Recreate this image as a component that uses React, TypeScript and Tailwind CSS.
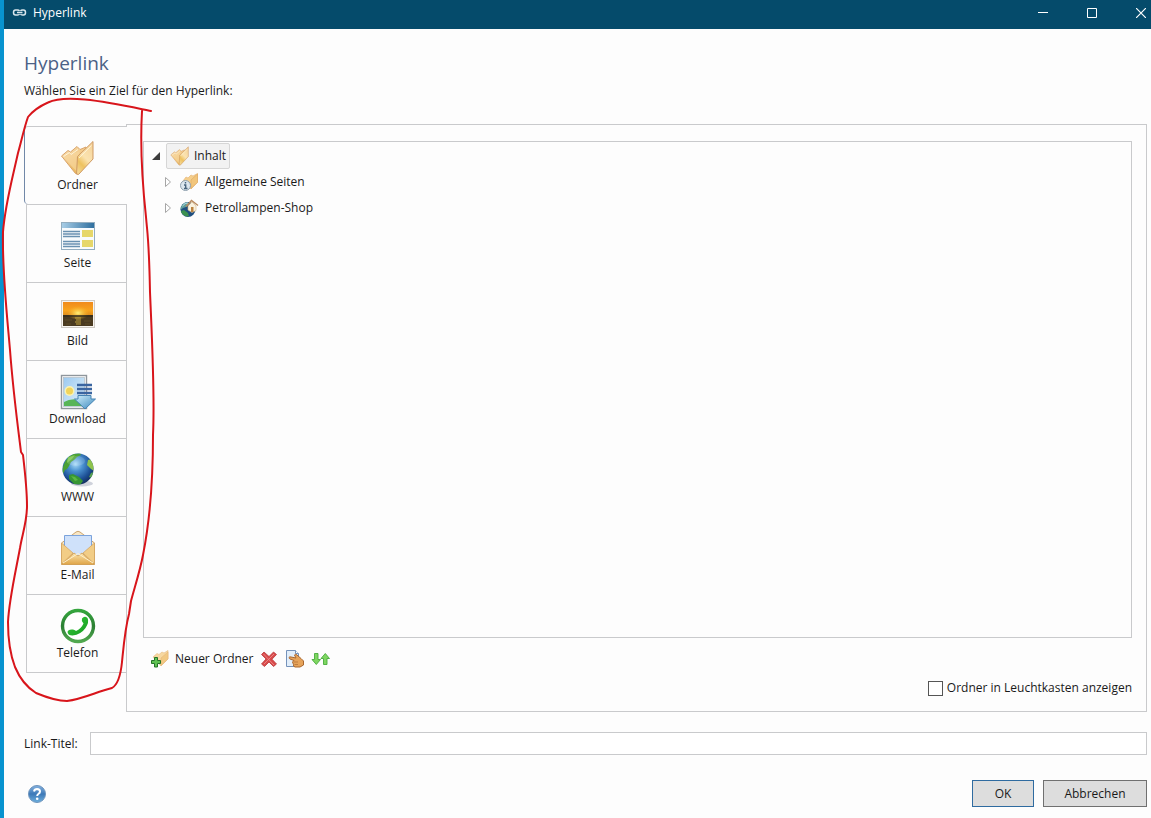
import React, { useState } from 'react';
import clsx from 'clsx';

const FolderIcon = ({ className }: { className: string }) => (
  <svg viewBox="0 0 36 36" className={className} aria-hidden="true">
    <defs>
      <linearGradient id="folderFront" x1="0.8" y1="0" x2="0.3" y2="1">
        <stop offset="0" stopColor="#f6d49a" />
        <stop offset="0.5" stopColor="#fbe3b0" />
        <stop offset="0.75" stopColor="#eec25f" />
        <stop offset="1" stopColor="#f3d48e" />
      </linearGradient>
      <linearGradient id="folderBack" x1="0" y1="0" x2="0.6" y2="1">
        <stop offset="0" stopColor="#fbe6c0" />
        <stop offset="0.5" stopColor="#f2c987" />
        <stop offset="1" stopColor="#e9b656" />
      </linearGradient>
    </defs>
    <path d="M1.500 16 L8 10.500 L10.500 12 L17 6.500 L20 9.500 L26 7 V20 L17.500 34 L15.500 33.500 Z" fill="url(#folderBack)" stroke="#d9a46c" />
    <path d="M3.500 17 L11 14.500 L20 11 L18 17 L17 32 Z" fill="#f8d9a2" opacity="0.6" />
    <path d="M3.500 16.500 L9.500 12.500 L11 14.500 L18 9.500" fill="none" stroke="#fff6df" opacity="0.9" />
    <path d="M17.500 16.500 L33 1.500 V19 L18.500 34.500 L16.500 34 Z" fill="url(#folderFront)" stroke="#cf9a64" />
    <path d="M19 18 L31.500 5.500" stroke="#fff6df" opacity="0.8" />
  </svg>
);

const Globe = ({ className }: { className: string }) => (
  <svg viewBox="0 0 36 36" className={className} aria-hidden="true">
    <defs>
      <radialGradient id="globeSea" cx="0.42" cy="0.34" r="0.68">
        <stop offset="0" stopColor="#a9dcf8" />
        <stop offset="0.35" stopColor="#4a91d0" />
        <stop offset="0.75" stopColor="#1c4f94" />
        <stop offset="1" stopColor="#142f5e" />
      </radialGradient>
      <clipPath id="globeClip">
        <circle cx="18" cy="17" r="15.500" />
      </clipPath>
    </defs>
    <ellipse cx="22" cy="31.500" rx="11" ry="3" fill="#cfd2db" />
    <circle cx="18" cy="17" r="15.500" fill="url(#globeSea)" />
    <g clipPath="url(#globeClip)">
      <path d="M2 19 Q4 7 13 2 L20 1 L21 3 L17 5 L14 8 L11 10 L9 14 L7 17 L5 18 L3 22 Z" fill="#4ba136" />
      <path d="M8 5 L15 3 L12 7 L7 11 Z" fill="#78c34b" />
      <path d="M9 23 L13 22 L19 25 L23 29 L20 33 L14 32 L9 27 Z" fill="#379634" />
      <path d="M11 24 L15 25 L18 28 L15 29 Z" fill="#5cb844" />
      <path d="M28 8 L32 7 L35 14 L34 19 L31 17 L27 13 Z" fill="#8ec34c" />
      <path d="M31 21 L34 20 L32 26 L29 25 Z" fill="#57a34e" />
      <ellipse cx="16" cy="9" rx="9" ry="5" fill="#fff" opacity="0.15" />
    </g>
  </svg>
);

const PageIcon = () => (
  <svg viewBox="0 0 36 36" className="size-9" aria-hidden="true">
    <defs>
      <linearGradient id="pageBar">
        <stop offset="0" stopColor="#a7cde6" />
        <stop offset="1" stopColor="#2f6f9f" />
      </linearGradient>
    </defs>
    <rect x="1.500" y="4.500" width="33" height="27" fill="#f8fbfd" stroke="#93adbf" />
    <rect x="2" y="5" width="32" height="5" fill="url(#pageBar)" />
    <path d="M3 13.500h17M3 16h17M3 18.500h17M3 23.500h17M3 26h17M3 28.500h17" stroke="#6991b1" strokeWidth="1.300" />
    <rect x="22" y="12" width="11" height="7" fill="#e6d76a" />
    <rect x="22" y="22" width="11" height="7" fill="#e6d76a" />
  </svg>
);

const ImageIcon = () => (
  <svg viewBox="0 0 36 36" className="size-9" aria-hidden="true">
    <defs>
      <linearGradient id="sunsetSky" x1="0" y1="0" x2="0" y2="1">
        <stop offset="0" stopColor="#f08a1c" />
        <stop offset="0.6" stopColor="#f8a31c" />
        <stop offset="1" stopColor="#d98a1e" />
      </linearGradient>
      <radialGradient id="sunsetGlow">
        <stop offset="0" stopColor="#fff27a" />
        <stop offset="1" stopColor="#f8b52a" stopOpacity="0" />
      </radialGradient>
    </defs>
    <rect x="1.500" y="4.500" width="33" height="27" fill="#f8f5f0" stroke="#cfcac4" />
    <rect x="3" y="6" width="30" height="14" fill="url(#sunsetSky)" />
    <rect x="3" y="19" width="30" height="11" fill="#4a3a20" />
    <ellipse cx="18" cy="17" rx="11" ry="7" fill="url(#sunsetGlow)" />
    <rect x="3" y="19" width="30" height="2" fill="#30291b" opacity="0.7" />
    <path d="M15 22h6M16 24h5M15 26h6M16 28h5" stroke="#c0a23c" strokeWidth="1.200" />
    <path d="M5 24h7M24 25h7M6 28h5M25 28h5" stroke="#5d4a27" />
  </svg>
);

const DownloadIcon = () => (
  <svg viewBox="0 0 36 36" className="size-9" aria-hidden="true">
    <defs>
      <linearGradient id="dlSky" x1="0" y1="0" x2="1" y2="1">
        <stop offset="0" stopColor="#9cc9f0" />
        <stop offset="1" stopColor="#e3f4fc" />
      </linearGradient>
      <linearGradient id="dlArrow" x1="0" y1="0" x2="1" y2="1">
        <stop offset="0" stopColor="#d3f2fc" />
        <stop offset="1" stopColor="#3a86bd" />
      </linearGradient>
    </defs>
    <rect x="1.500" y="1.500" width="25" height="33" fill="#fff" stroke="#8f969c" strokeWidth="1.400" />
    <rect x="3.500" y="3.500" width="21" height="29" fill="url(#dlSky)" stroke="#a9b6bf" strokeWidth="0.600" />
    <path d="M4 28 Q12 23 24 27 V32 H4 Z" fill="#58b557" />
    <circle cx="9.500" cy="17" r="5" fill="#fbf3b2" />
    <circle cx="9.500" cy="17" r="3.500" fill="#f1d45a" />
    <path d="M17 11h15M17 15h15M17 19h15" stroke="#3a65a0" strokeWidth="2.400" />
    <path d="M18 21.500h13v3.500h4.500L25 35 14.500 25H18z" fill="url(#dlArrow)" stroke="#4583b3" />
  </svg>
);

const MailIcon = () => (
  <svg viewBox="0 0 36 36" className="size-9" aria-hidden="true">
    <defs>
      <linearGradient id="mailBody" x1="0" y1="0" x2="0" y2="1">
        <stop offset="0" stopColor="#fbe3ab" />
        <stop offset="1" stopColor="#dfa548" />
      </linearGradient>
    </defs>
    <path d="M1.500 13 L16 2 Q18 0.500 20 2 L34.500 13 V34 H1.500 Z" fill="#f8e6c4" stroke="#cba570" />
    <path d="M4.500 5.500h27V20L18 27 4.500 20z" fill="#cfe1fa" stroke="#7ba3dc" />
    <path d="M1.500 13 L13 23 L1.500 34 Z M34.500 13 L23 23 L34.500 34 Z" fill="#f2cd86" stroke="#d2a25b" strokeWidth="0.700" />
    <path d="M1.500 34.500 L14 23 L18 26 L22 23 L34.500 34.500 Z" fill="url(#mailBody)" stroke="#cf9b4c" strokeWidth="0.800" />
    <path d="M3 33 L18 23.500 L33 33" fill="none" stroke="#fff1cd" />
  </svg>
);

const PhoneIcon = () => (
  <svg viewBox="0 0 36 36" className="size-9" aria-hidden="true">
    <defs>
      <linearGradient id="phoneRing" x1="0" y1="0" x2="0" y2="1">
        <stop offset="0" stopColor="#35a53e" />
        <stop offset="0.5" stopColor="#2c7f34" />
        <stop offset="1" stopColor="#51a84f" />
      </linearGradient>
      <linearGradient id="phoneBody" x1="0" y1="0" x2="1" y2="1">
        <stop offset="0" stopColor="#36c83c" />
        <stop offset="1" stopColor="#159c20" />
      </linearGradient>
    </defs>
    <circle cx="18" cy="18" r="15.500" fill="#fff" stroke="url(#phoneRing)" strokeWidth="3.400" />
    <path
      d="M22 10.500 Q24.500 7.500 27.500 10 Q29.500 14 25.500 20 Q21 26.500 12.500 27.500 Q8 27.500 7.500 24 Q8 21 13 21.500 Q15.500 22 16 23 Q21 21 23.500 15.500 Q21 13 22 10.500 Z"
      fill="url(#phoneBody)"
    />
  </svg>
);

const LockedFolderIcon = () => (
  <svg viewBox="0 0 20 20" className="size-5" aria-hidden="true">
    <path d="M3 9 L6 5 L8 6 L11 3 L13 4 L17.500 1.500 V10 L11 17 Z" fill="#f5cf8c" stroke="#e6b87a" strokeWidth="0.700" />
    <path d="M11 8 L17.500 2 V10.500 L11 16.500 Z" fill="#f2c67c" stroke="#dca763" strokeWidth="0.600" />
    <circle cx="5.500" cy="13.500" r="5" fill="#dbe6ee" stroke="#8ea0ae" />
    <path d="M5.500 10v1.500M4 13H5.700V16M4 16.500h3.500" stroke="#47637c" strokeWidth="1.400" fill="none" />
  </svg>
);

const ShopIcon = () => (
  <svg viewBox="0 0 20 20" className="size-5" aria-hidden="true">
    <circle cx="8" cy="11.500" r="7.500" fill="#1f4f80" />
    <path d="M0.500 12 Q1 5 7 4 L9 6 L6 9 L3 10 Z" fill="#5f9f9a" />
    <path d="M1 13 L4 12 L8 15 L9 18.500 Q4 18.500 1.500 15 Z" fill="#3c9150" />
    <path d="M2.500 8 Q5 4.500 8 5" stroke="#b6dde6" fill="none" />
    <path d="M8 8 L12 4 L16 8 V12.500 L12 14.500 L8 12 Z" fill="#faf1dd" stroke="#d3b585" strokeWidth="0.600" />
    <path d="M6 8.500 L11.500 2.500 L18 7.500" fill="none" stroke="#b98a5e" strokeWidth="1.500" />
    <path d="M11 9h2.500v5H11z" fill="#b9813f" />
  </svg>
);

const NewFolderIcon = () => (
  <svg viewBox="0 0 20 20" className="size-5" aria-hidden="true">
    <path d="M3 8 L7 4.500 L9 5.500 L12 3 L14 4 L18 1.500 V10 L11 17 Z" fill="#f7d8a0" stroke="#e9c08a" strokeWidth="0.700" />
    <path d="M11 9 L18 3 V10 L11 16.500 Z" fill="#f2c983" stroke="#e2b277" strokeWidth="0.500" />
    <path d="M4.500 8.500h3v3h3v3h-3v3.500h-3v-3.500h-3v-3h3z" fill="#5fc253" stroke="#257329" />
  </svg>
);

const DeleteIcon = () => (
  <svg viewBox="0 0 20 20" className="size-5" aria-hidden="true">
    <path d="M5 3 L10 7.500 L14.500 3 L17.500 5.500 L13 10.200 L17.500 15 L14.500 17.500 L10 13 L5.500 17.500 L2.500 15 L7 10 L2.500 5.500 Z" fill="#d94a4a" stroke="#b83a3c" strokeWidth="0.800" />
    <path d="M4.500 5 L15 16 M15 5 L5 15" stroke="#ed9090" strokeWidth="0.800" />
  </svg>
);

const PropertiesIcon = () => (
  <svg viewBox="0 0 20 20" className="size-5" aria-hidden="true">
    <path d="M1.500 1.500h9l3 3v13h-12z" fill="#e2eefa" stroke="#7593bb" />
    <path d="M10.500 1.500v3h3" fill="#fff" stroke="#7593bb" />
    <path
      d="M4 8.500 Q4.500 7.500 6 8 L11 9 L9.500 6 Q10.500 4.500 12 6 L16 9.500 L18.500 12 V16 L15 18 H10 Q8 17.500 8.500 15.500 L7.500 13 L9 11.500 L5 10 Q4 9.500 4 8.500 Z"
      fill="#e6a35a"
      stroke="#a9672f"
    />
    <path d="M9 13h4M9.500 15.500h3.500" stroke="#b4733a" strokeWidth="0.800" />
  </svg>
);

const SortIcon = () => (
  <svg viewBox="0 0 20 20" className="size-5" aria-hidden="true">
    <path d="M3.500 4.500h3.500v6h2.500L5.300 15.500 1 10.500h2.500z" fill="#7fd661" stroke="#48ab3c" strokeWidth="0.900" />
    <path d="M12.500 15.500h3.500v-6h2.500L14.300 4.500 10 9.500h2.500z" fill="#7fd661" stroke="#48ab3c" strokeWidth="0.900" />
  </svg>
);

const HelpIcon = () => (
  <svg viewBox="0 0 20 20" className="size-5" aria-hidden="true">
    <defs>
      <linearGradient id="helpFill" x1="0" y1="0" x2="0" y2="1">
        <stop offset="0" stopColor="#86b3e0" />
        <stop offset="0.5" stopColor="#3d79b8" />
        <stop offset="1" stopColor="#6dafdd" />
      </linearGradient>
    </defs>
    <circle cx="10" cy="10" r="8.500" fill="url(#helpFill)" stroke="#6f95bd" />
    <path d="M7 7.500 Q7.500 5 10 5 Q13 5.200 13 7.500 Q13 9 11.300 10 Q10.200 10.700 10.200 12" fill="none" stroke="#fff" strokeWidth="2" />
    <circle cx="10.200" cy="14.800" r="1.300" fill="#fff" />
  </svg>
);

// Hand-drawn marker around the target tabs
const Annotation = () => (
  <svg className="pointer-events-none absolute top-0 left-0 z-10 h-[720px] w-[170px]" viewBox="0 0 170 720" aria-hidden="true">
    <path
      d="M151 111 C136 108 110 102 85 99.500 C70 98 55 99 48 102.500 C40 106 32 112 28 117 C24 128 22 139 18 153 C12 180 5 205 3 232 C2 270 7 315 10 350 C13 390 17 420 21 452 L23 455 C25 472 27 490 27 506 C27 522 22 535 20 548 C16 570 9 600 8 622 C8 640 10 654 15 667 C20 679 28 688 36 693 C48 698 58 701 67 701 C83 699 96 692 112 688 C119 684 121 672 122 662 C124 642 125 629 129 614 L131 601 C135 586 140 571 143 555 C151 515 153 475 153 435 C155 395 152 340 150 292 C149 240 148 240 146 217 C142 180 140 145 142 111"
      fill="none"
      stroke="#d8151b"
      strokeWidth="2"
      strokeLinecap="round"
      strokeLinejoin="round"
    />
  </svg>
);

const TABS = [
  { id: 'folder', label: 'Ordner', icon: <FolderIcon className="size-9" /> },
  { id: 'page', label: 'Seite', icon: <PageIcon /> },
  { id: 'image', label: 'Bild', icon: <ImageIcon /> },
  { id: 'download', label: 'Download', icon: <DownloadIcon /> },
  { id: 'www', label: 'WWW', icon: <Globe className="size-9" /> },
  { id: 'mail', label: 'E-Mail', icon: <MailIcon /> },
  { id: 'phone', label: 'Telefon', icon: <PhoneIcon /> },
];

const TREE = [
  { label: 'Allgemeine Seiten', icon: <LockedFolderIcon /> },
  { label: 'Petrollampen-Shop', icon: <ShopIcon /> },
];

const TitleBar = () => (
  <header className="flex h-[29px] items-center bg-[#054b6b] pb-[3px] pl-2 text-white">
    <svg viewBox="0 0 16 10" className="mr-[5px] h-[10px] w-4" fill="none" stroke="#d9e6ec" strokeWidth="1.500" aria-hidden="true">
      <path d="M7.500 3 Q7 2 5.500 2 H3.500 Q1.500 2 1.500 4.500 Q1.500 7 3.500 7 H5.500 Q7 7 7.500 6" />
      <path d="M8.500 3 Q9 2 10.500 2 H11.500 Q13.500 2 13.500 4.500 Q13.500 7 11.500 7 H10.500 Q9 7 8.500 6" />
      <path d="M5 4.500h5.500" />
    </svg>
    <span className="flex-1">Hyperlink</span>
    <div className="flex gap-[29px]">
      <button aria-label="Minimieren" className="flex h-6 w-5 items-center justify-center">
        <svg viewBox="0 0 10 10" className="size-[10px]" stroke="#fff" fill="none"><path d="M0 4.500h10" /></svg>
      </button>
      <button aria-label="Maximieren" className="flex h-6 w-5 items-center justify-center">
        <svg viewBox="0 0 10 10" className="size-[10px]" stroke="#fff" fill="none"><path d="M.5.5h9v9h-9z" /></svg>
      </button>
      <button aria-label="Schließen" className="flex h-6 w-5 items-center justify-center">
        <svg viewBox="0 0 10 10" className="size-[10px]" stroke="#fff" strokeWidth="1.200" fill="none"><path d="M0 0l10 10M10 0L0 10" /></svg>
      </button>
    </div>
  </header>
);

const App = () => {
  const [active, setActive] = useState('folder');
  const [lightbox, setLightbox] = useState(false);
  const [title, setTitle] = useState('');

  return (
    <div className="relative flex min-h-screen flex-col border-l-4 border-[#0893cf] bg-[#fdfdfd] font-['Open_Sans','Noto_Sans',sans-serif] text-[12px] leading-4 text-[#1a1a1a]">
      <TitleBar />

      <main className="flex flex-1 flex-col pt-5 pr-1 pb-[11px] pl-5">
        <h1 className="text-[19px] leading-7 text-[#4b6186]">Hyperlink</h1>
        <p className="mt-[6px]">Wählen Sie ein Ziel für den Hyperlink:</p>

        <div className="mt-[25px] flex flex-1">
          {/* Target tabs */}
          <nav className="z-1 -mr-px flex w-[103px] shrink-0 flex-col pt-[2px]" role="tablist" aria-label="Ziel">
            {TABS.map((tab) => (
              <button
                key={tab.id}
                role="tab"
                aria-selected={active === tab.id}
                onClick={() => setActive(tab.id)}
                className={clsx(
                  'flex h-[78px] flex-col items-center border-t border-[#c9cacc] pt-[13px] last:h-[79px] last:border-b',
                  active === tab.id
                    ? 'rounded-l-sm border-l border-l-[#7188a8] bg-[#fdfdfd] pl-[3px]'
                    : 'ml-[2px] border-x pl-[2px]'
                )}
              >
                {tab.icon}
                <span className="mt-px">{tab.label}</span>
              </button>
            ))}
          </nav>

          <section className="flex flex-1 flex-col border border-[#c9cacc] p-4 pr-[14px] pb-[15px]">
            {/* Folder tree */}
            <div className="flex-1 border border-[#c9cacc] pt-px pl-2" role="tree" aria-label="Ordner">
              <div className="flex h-[26px] items-center" role="treeitem" aria-expanded="true" aria-selected="true">
                <svg viewBox="0 0 8 8" className="mr-[6px] size-2" aria-hidden="true"><path d="M8 0v8H0z" fill="#3c3c3c" /></svg>
                <div className="flex h-[26px] items-center gap-1 rounded-xs border border-[#d6d6d6] bg-[#f2f2f2] px-[3px]">
                  <FolderIcon className="size-5" />
                  <span>Inhalt</span>
                </div>
              </div>
              {TREE.map((node) => (
                <div key={node.label} className="flex h-[26px] items-center pl-3" role="treeitem" aria-expanded="false" aria-selected="false">
                  <svg viewBox="0 0 8 10" className="mr-2 h-[10px] w-2" aria-hidden="true"><path d="M1.500 .5v9L6.500 5z" fill="#fff" stroke="#a6a6a6" /></svg>
                  {node.icon}
                  <span className="ml-[5px]">{node.label}</span>
                </div>
              ))}
            </div>

            <div className="mt-[11px] flex items-center gap-[6px] pl-[7px]">
              <button className="flex items-center gap-[5px]"><NewFolderIcon />Neuer Ordner</button>
              <button aria-label="Löschen"><DeleteIcon /></button>
              <button aria-label="Eigenschaften"><PropertiesIcon /></button>
              <button aria-label="Sortieren"><SortIcon /></button>
            </div>

            <label className="mt-[11px] flex items-center gap-1 self-end">
              <input
                type="checkbox"
                checked={lightbox}
                onChange={(e) => setLightbox(e.target.checked)}
                className="size-[15px] appearance-none border border-[#555] bg-white checked:bg-[#054b6b]"
              />
              Ordner in Leuchtkasten anzeigen
            </label>
          </section>
        </div>

        <div className="mt-5 flex items-center">
          <label htmlFor="link-title" className="w-[66px]">Link-Titel:</label>
          <input
            id="link-title"
            value={title}
            onChange={(e) => setTitle(e.target.value)}
            className="h-[23px] min-w-0 flex-1 border border-[#c9cacc] bg-white px-1 outline-none"
          />
        </div>

        <footer className="mt-[25px] flex items-center gap-[9px] pl-[3px]">
          <button aria-label="Hilfe" className="mr-auto"><HelpIcon /></button>
          <button className="h-[27px] w-[62px] border border-[#2f6ba0] bg-[#dddddd]">OK</button>
          <button className="h-[27px] w-[104px] border border-[#707070] bg-[#dddddd]">Abbrechen</button>
        </footer>
      </main>

      <div className="absolute top-0 -left-1">
        <Annotation />
      </div>
    </div>
  );
};

export default App;
